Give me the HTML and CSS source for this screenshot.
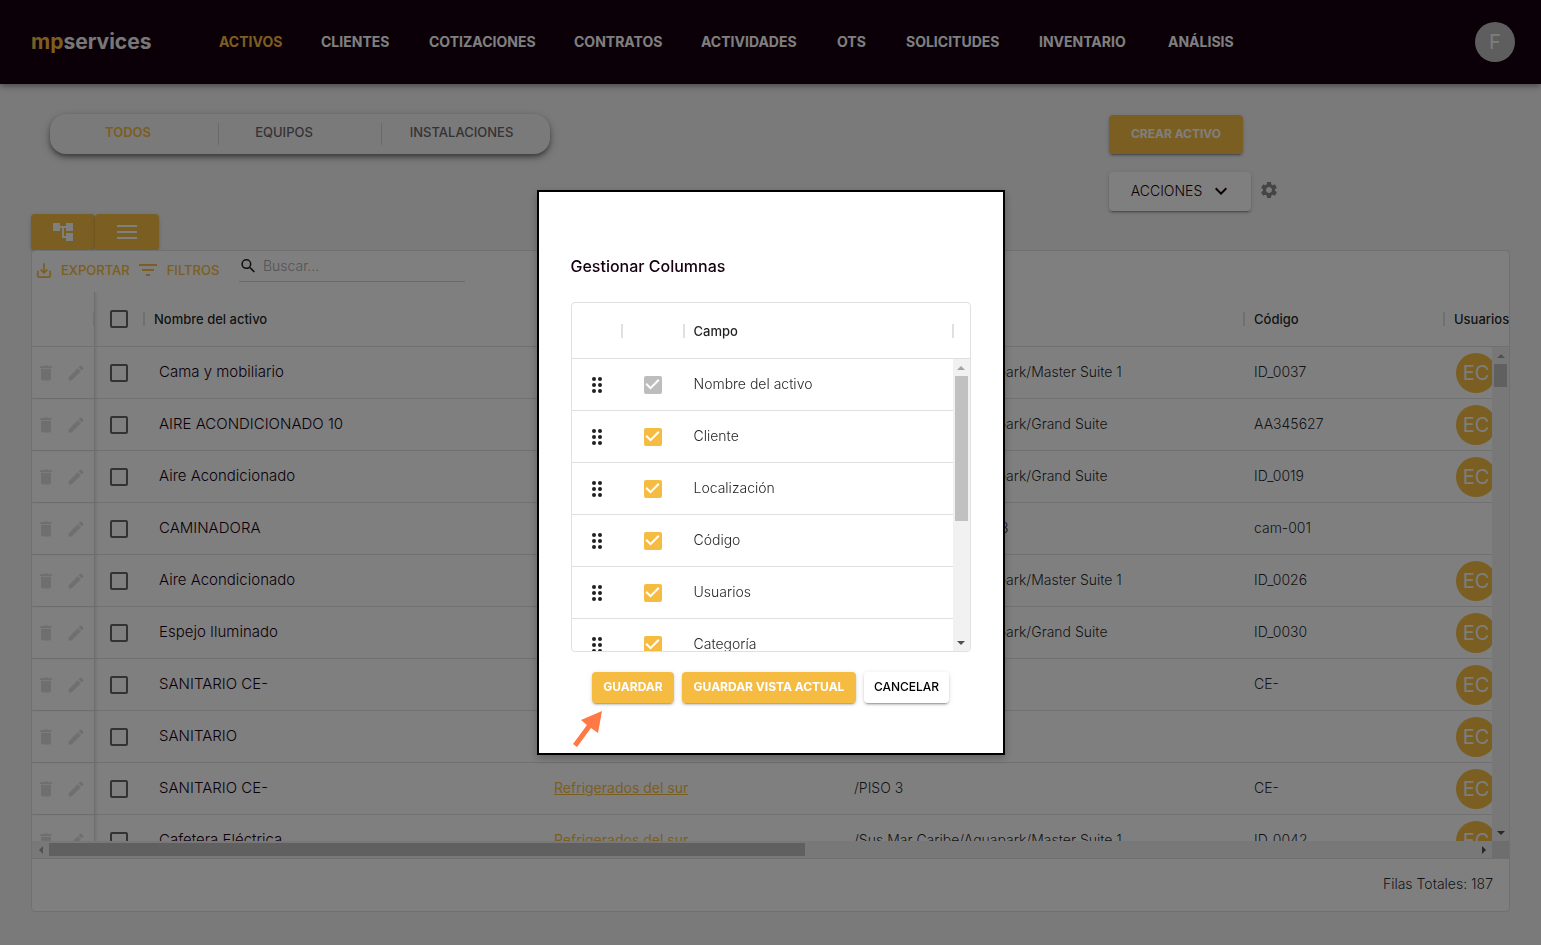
FILE: index.html
```html
<!DOCTYPE html>
<html lang="es">
<head>
<meta charset="utf-8">
<meta name="viewport" content="width=device-width, initial-scale=1">
<title>mpservices - Activos</title>
<link rel="stylesheet" href="styles.css">
</head>
<body>
<svg class="sprite" aria-hidden="true">
  <symbol id="i-trash" viewBox="0 0 24 24"><path d="M6 19c0 1.100.9 2 2 2h8c1.100 0 2-.9 2-2V7H6v12zM19 4h-3.500l-1-1h-5l-1 1H5v2h14V4z"/></symbol>
  <symbol id="i-pen" viewBox="0 0 24 24"><path d="M3 17.250V21h3.750L17.810 9.940l-3.750-3.750L3 17.250zM20.710 7.040c.39-.39.39-1.020 0-1.410l-2.340-2.340a1 1 0 0 0-1.410 0l-1.830 1.830 3.750 3.750 1.830-1.830z"/></symbol>
  <symbol id="i-drag" viewBox="0 0 12 18"><circle cx="3" cy="3" r="2"/><circle cx="9" cy="3" r="2"/><circle cx="3" cy="9" r="2"/><circle cx="9" cy="9" r="2"/><circle cx="3" cy="15" r="2"/><circle cx="9" cy="15" r="2"/></symbol>
</svg>

<header class="topbar">
  <a class="logo" href="#"><span class="logo-mp">mp</span>services</a>
  <nav class="nav">
    <a class="active" href="#">ACTIVOS</a>
    <a href="#">CLIENTES</a>
    <a href="#">COTIZACIONES</a>
    <a href="#">CONTRATOS</a>
    <a href="#">ACTIVIDADES</a>
    <a href="#">OTS</a>
    <a href="#">SOLICITUDES</a>
    <a href="#">INVENTARIO</a>
    <a href="#">ANÁLISIS</a>
  </nav>
  <button class="avatar user" type="button">F</button>
</header>

<main class="page">
  <section class="controls">
    <div class="tabs">
      <button class="tab tab-all active" type="button">TODOS</button>
      <button class="tab tab-equip" type="button">EQUIPOS</button>
      <button class="tab" type="button">INSTALACIONES</button>
    </div>
    <div class="actions">
      <button class="btn btn-primary btn-create" type="button">CREAR ACTIVO</button>
      <div class="actions-row">
        <button class="btn btn-actions" type="button">ACCIONES
          <svg width="24" height="24" viewBox="0 0 24 24"><path d="M7.410 8.590 12 13.170l4.590-4.580L18 10l-6 6-6-6z" fill="currentColor"/></svg>
        </button>
        <button class="icon-btn" type="button" aria-label="Configuración">
          <svg width="20" height="20" viewBox="0 0 24 24"><path fill="currentColor" d="M19.140 12.940c.04-.3.06-.61.06-.94 0-.32-.02-.64-.07-.94l2.030-1.580c.18-.14.23-.41.12-.61l-1.920-3.320c-.12-.22-.37-.29-.59-.22l-2.390.96c-.5-.38-1.030-.7-1.620-.94l-.36-2.540c-.04-.24-.24-.41-.48-.41h-3.840c-.24 0-.43.17-.47.41l-.36 2.540c-.59.24-1.130.57-1.620.94l-2.390-.96c-.22-.08-.47 0-.59.22L2.740 8.870c-.12.21-.08.47.12.61l2.030 1.580c-.05.3-.09.63-.09.94s.02.64.07.94l-2.030 1.580c-.18.14-.23.41-.12.61l1.920 3.320c.12.22.37.29.59.22l2.390-.96c.5.38 1.030.7 1.620.94l.36 2.540c.05.24.24.41.48.41h3.840c.24 0 .44-.17.47-.41l.36-2.540c.59-.24 1.130-.56 1.620-.94l2.390.96c.22.08.47 0 .59-.22l1.920-3.320c.12-.22.07-.47-.12-.61l-2.010-1.580zM12 15.600c-1.980 0-3.600-1.620-3.600-3.600s1.620-3.600 3.600-3.600 3.600 1.620 3.600 3.600-1.620 3.600-3.600 3.600z"/></svg>
        </button>
      </div>
    </div>
  </section>

  <div class="views">
    <button class="btn btn-primary view" type="button" aria-label="Vista de árbol"><svg width="24" height="24" viewBox="0 0 24 24"><path fill="currentColor" d="M22 11V3h-7v3H9V3H2v8h7V8h2v10h4v3h7v-8h-7v3h-2V8h2v3z"/></svg></button>
    <button class="btn btn-primary view" type="button" aria-label="Vista de lista"><svg width="20" height="14" viewBox="0 0 20 14"><path fill="currentColor" d="M0 0h20v2H0zM0 6h20v2H0zM0 12h20v2H0z"/></svg></button>
  </div>

  <section class="grid">
    <div class="toolbar">
      <button class="tool" type="button"><svg width="20" height="20" viewBox="0 0 24 24"><path fill="none" stroke="currentColor" stroke-width="2" d="M4.500 13v6A1.500 1.500 0 0 0 6 20.500h12a1.500 1.500 0 0 0 1.500-1.500v-6M12 4v11M8 11.500l4 4 4-4"/></svg>EXPORTAR</button>
      <button class="tool" type="button"><svg width="18" height="12" viewBox="0 0 18 12"><path fill="currentColor" d="M0 0h18v2H0zM3 5h12v2H3zM7 10h4v2H7z"/></svg>FILTROS</button>
      <label class="search">
        <svg width="20" height="20" viewBox="0 0 24 24"><path fill="currentColor" d="M15.500 14h-.79l-.28-.27A6.470 6.470 0 0 0 16 9.500 6.500 6.500 0 1 0 9.500 16c1.610 0 3.090-.59 4.230-1.570l.27.28v.79l5 4.990L20.490 19l-4.990-5zm-6 0a4.500 4.500 0 1 1 0-9 4.500 4.500 0 0 1 0 9z"/></svg>
        <input type="text" placeholder="Buscar..." aria-label="Buscar">
      </label>
    </div>

    <div class="head-clip">
      <table class="data">
        <colgroup><col class="c-tools"><col class="c-check"><col class="c-name"><col class="c-client"><col class="c-place"><col class="c-code"><col class="c-users"></colgroup>
        <thead><tr>
          <th class="pinned"></th><th><input class="check" type="checkbox" aria-label="Seleccionar todo"></th><th>Nombre del activo</th><th>Cliente</th><th>Localización</th><th>Código</th><th class="last">Usuarios</th>
        </tr></thead>
      </table>
    </div>

    <div class="body-row">
      <div class="body-clip">
        <table class="data">
          <colgroup><col class="c-tools"><col class="c-check"><col class="c-name"><col class="c-client"><col class="c-place"><col class="c-code"><col class="c-users"></colgroup>
          <tbody>
            <tr><td class="pinned"><svg class="ico"><use href="#i-trash"/></svg><svg class="ico"><use href="#i-pen"/></svg></td><td><input class="check" type="checkbox" aria-label="Seleccionar fila"></td><td class="name">Cama y mobiliario</td><td><a href="#">Refrigerados del sur</a></td><td>/Sus Mar Caribe/Aquapark/Master Suite 1</td><td>ID_0037</td><td class="users"><span class="avatar">EC</span></td></tr>
            <tr><td class="pinned"><svg class="ico"><use href="#i-trash"/></svg><svg class="ico"><use href="#i-pen"/></svg></td><td><input class="check" type="checkbox" aria-label="Seleccionar fila"></td><td class="name">AIRE ACONDICIONADO 10</td><td><a href="#">Refrigerados del sur</a></td><td>/Sus Mar Caribe/Aquapark/Grand Suite</td><td>AA345627</td><td class="users"><span class="avatar">EC</span></td></tr>
            <tr><td class="pinned"><svg class="ico"><use href="#i-trash"/></svg><svg class="ico"><use href="#i-pen"/></svg></td><td><input class="check" type="checkbox" aria-label="Seleccionar fila"></td><td class="name">Aire Acondicionado</td><td><a href="#">Refrigerados del sur</a></td><td>/Sus Mar Caribe/Aquapark/Grand Suite</td><td>ID_0019</td><td class="users"><span class="avatar">EC</span></td></tr>
            <tr><td class="pinned"><svg class="ico"><use href="#i-trash"/></svg><svg class="ico"><use href="#i-pen"/></svg></td><td><input class="check" type="checkbox" aria-label="Seleccionar fila"></td><td class="name">CAMINADORA</td><td><a href="#">Refrigerados del sur</a></td><td>/Sus Mar Caribe/PISO 3</td><td>cam-001</td><td class="users"></td></tr>
            <tr><td class="pinned"><svg class="ico"><use href="#i-trash"/></svg><svg class="ico"><use href="#i-pen"/></svg></td><td><input class="check" type="checkbox" aria-label="Seleccionar fila"></td><td class="name">Aire Acondicionado</td><td><a href="#">Refrigerados del sur</a></td><td>/Sus Mar Caribe/Aquapark/Master Suite 1</td><td>ID_0026</td><td class="users"><span class="avatar">EC</span></td></tr>
            <tr><td class="pinned"><svg class="ico"><use href="#i-trash"/></svg><svg class="ico"><use href="#i-pen"/></svg></td><td><input class="check" type="checkbox" aria-label="Seleccionar fila"></td><td class="name">Espejo Iluminado</td><td><a href="#">Refrigerados del sur</a></td><td>/Sus Mar Caribe/Aquapark/Grand Suite</td><td>ID_0030</td><td class="users"><span class="avatar">EC</span></td></tr>
            <tr><td class="pinned"><svg class="ico"><use href="#i-trash"/></svg><svg class="ico"><use href="#i-pen"/></svg></td><td><input class="check" type="checkbox" aria-label="Seleccionar fila"></td><td class="name">SANITARIO CE-</td><td></td><td></td><td>CE-</td><td class="users"><span class="avatar">EC</span></td></tr>
            <tr><td class="pinned"><svg class="ico"><use href="#i-trash"/></svg><svg class="ico"><use href="#i-pen"/></svg></td><td><input class="check" type="checkbox" aria-label="Seleccionar fila"></td><td class="name">SANITARIO</td><td><a href="#">Refrigerados del sur</a></td><td>/PISO 3</td><td></td><td class="users"><span class="avatar">EC</span></td></tr>
            <tr><td class="pinned"><svg class="ico"><use href="#i-trash"/></svg><svg class="ico"><use href="#i-pen"/></svg></td><td><input class="check" type="checkbox" aria-label="Seleccionar fila"></td><td class="name">SANITARIO CE-</td><td><a href="#">Refrigerados del sur</a></td><td>/PISO 3</td><td>CE-</td><td class="users"><span class="avatar">EC</span></td></tr>
            <tr><td class="pinned"><svg class="ico"><use href="#i-trash"/></svg><svg class="ico"><use href="#i-pen"/></svg></td><td><input class="check" type="checkbox" aria-label="Seleccionar fila"></td><td class="name">Cafetera Eléctrica</td><td><a href="#">Refrigerados del sur</a></td><td>/Sus Mar Caribe/Aquapark/Master Suite 1</td><td>ID_0042</td><td class="users"><span class="avatar">EC</span></td></tr>
          </tbody>
        </table>
      </div>
      <div class="vbar"><i class="arrow up"></i><i class="thumb thumb-short"></i><i class="arrow down"></i></div>
    </div>
    <div class="hbar-row">
      <div class="hbar"><i class="arrow left"></i><div class="rail"><i class="thumb"></i></div><i class="arrow right"></i></div>
      <div class="corner"></div>
    </div>
    <footer class="total">Filas Totales: 187</footer>
  </section>
</main>

<div class="backdrop">
  <div class="modal" role="dialog" aria-modal="true" aria-labelledby="modal-title">
    <h2 id="modal-title">Gestionar Columnas</h2>
    <div class="fields">
      <table class="field-table">
        <colgroup><col class="f-drag"><col class="f-check"><col></colgroup>
        <thead><tr><th></th><th></th><th>Campo</th><th class="f-end"></th></tr></thead>
      </table>
      <div class="fields-body">
        <div class="fields-clip">
          <table class="field-table">
            <colgroup><col class="f-drag"><col class="f-check"><col></colgroup>
            <tbody>
              <tr><td><svg class="drag"><use href="#i-drag"/></svg></td><td><input class="check" id="f1" type="checkbox" checked disabled></td><td><label for="f1">Nombre del activo</label></td></tr>
              <tr><td><svg class="drag"><use href="#i-drag"/></svg></td><td><input class="check" id="f2" type="checkbox" checked></td><td><label for="f2">Cliente</label></td></tr>
              <tr><td><svg class="drag"><use href="#i-drag"/></svg></td><td><input class="check" id="f3" type="checkbox" checked></td><td><label for="f3">Localización</label></td></tr>
              <tr><td><svg class="drag"><use href="#i-drag"/></svg></td><td><input class="check" id="f4" type="checkbox" checked></td><td><label for="f4">Código</label></td></tr>
              <tr><td><svg class="drag"><use href="#i-drag"/></svg></td><td><input class="check" id="f5" type="checkbox" checked></td><td><label for="f5">Usuarios</label></td></tr>
              <tr><td><svg class="drag"><use href="#i-drag"/></svg></td><td><input class="check" id="f6" type="checkbox" checked></td><td><label for="f6">Categoría</label></td></tr>
            </tbody>
          </table>
        </div>
        <div class="vbar"><i class="arrow up"></i><i class="thumb thumb-long"></i><i class="arrow down"></i></div>
      </div>
    </div>
    <div class="modal-actions">
      <button class="btn btn-primary btn-save" type="button">GUARDAR</button>
      <button class="btn btn-primary btn-save-view" type="button">GUARDAR VISTA ACTUAL</button>
      <button class="btn btn-cancel" type="button">CANCELAR</button>
    </div>
    <svg class="pointer" width="32" height="38" viewBox="0 0 32 38" aria-hidden="true"><path fill="#ff7846" d="M30 2 26 24l-7-5L5 38l-4-3L15 16l-6-5z"/></svg>
  </div>
</div>
</body>
</html>
```
FILE: styles.css
```css
:root {
  --yellow: #f6bc42;
  --line: #e0e0e0;
  --ink: #160010;
  --shadow: 0 3px 1px -2px rgba(0, 0, 0, .2), 0 2px 2px rgba(0, 0, 0, .14), 0 1px 5px rgba(0, 0, 0, .12);
}

* { box-sizing: border-box; }

body {
  display: flex;
  flex-direction: column;
  height: 100vh;
  margin: 0;
  overflow: hidden;
  background: #f4f4f4;
  color: rgba(0, 0, 0, .87);
  font: 14px/20px Inter, "Liberation Sans", sans-serif;
}

button, input { font: inherit; }
button { padding: 0; border: 0; background: none; cursor: pointer; }
.sprite { position: absolute; width: 0; height: 0; }

/* Top bar */
.topbar {
  display: flex;
  flex: none;
  align-items: center;
  height: 84px;
  padding: 0 26px 0 31px;
  background: var(--ink);
  box-shadow: 0 2px 4px -1px rgba(0, 0, 0, .2), 0 4px 5px rgba(0, 0, 0, .14), 0 1px 10px rgba(0, 0, 0, .12);
}
.logo { width: 188px; color: #f0eeee; font-size: 21px; font-weight: 700; text-decoration: none; }
.logo-mp { color: var(--yellow); }
.nav { display: grid; grid-template-columns: 102px 108px 145px 127px 136px 69px 133px 129px auto; }
.nav a { color: #fff; font-weight: 700; text-decoration: none; }
.nav .active { color: var(--yellow); }
.avatar {
  display: inline-flex;
  flex: none;
  align-items: center;
  justify-content: center;
  width: 40px;
  height: 40px;
  border-radius: 50%;
  background: var(--yellow);
  color: #fafafa;
  font-size: 20px;
}
.user { margin-left: auto; background: #bdbdbd; }

/* Page controls */
.page { display: flex; flex: 1; flex-direction: column; min-height: 0; padding: 30px 31px 33px; }
.controls { display: grid; grid-template-columns: 1fr 401px; height: 100px; flex: none; }
.tabs {
  display: grid;
  grid-template-columns: 169px 163px 159px;
  align-items: center;
  width: 500px;
  height: 40px;
  margin-left: 19px;
  border-radius: 16px;
  background: #f5f5f5;
  box-shadow: 0 3px 5px -1px rgba(0, 0, 0, .4), 0 3px 8px rgba(0, 0, 0, .3);
}
.tab { height: 22px; padding-bottom: 4px; color: #6b646a; font-size: 13px; font-weight: 500; line-height: 18px; }
.tab.active { color: var(--yellow); font-weight: 600; }
.tab-all { padding-right: 12px; border-right: 1px solid #d5d5d5; }
.tab-equip { padding-right: 32px; border-right: 1px solid #d5d5d5; }
.actions { display: flex; flex-direction: column; gap: 18px; padding-top: 1px; }
.actions-row { display: flex; align-items: center; gap: 8px; }
.btn {
  display: flex;
  align-items: center;
  justify-content: center;
  padding-bottom: 2px;
  border-radius: 4px;
  background: #fff;
  box-shadow: var(--shadow);
  color: #000;
  white-space: nowrap;
}
.btn-primary { background: var(--yellow); color: #fff; font-weight: 700; }
.btn-create { width: 134px; height: 39px; font-size: 12px; }
.btn-actions { gap: 7px; width: 142px; height: 39px; padding-left: 4px; font-weight: 300; color: var(--ink); }
.icon-btn { display: flex; padding-bottom: 4px; color: #8b8b8b; }
.views { display: flex; flex: none; }
.view { width: 64px; height: 36px; padding: 0; color: #fff; }

/* Asset grid */
.grid {
  display: flex;
  flex: 1;
  flex-direction: column;
  min-height: 0;
  overflow: hidden;
  border: 1px solid var(--line);
  border-radius: 4px;
  background: #fff;
}
.toolbar { display: flex; flex: none; height: 41px; padding: 0 0 3px 2px; }
.tool { display: flex; align-items: center; gap: 7px; margin-right: 9px; color: var(--yellow); font-size: 13px; font-weight: 500; }
.tool + .tool { gap: 10px; margin-right: 20px; }
.search { display: flex; align-items: center; width: 226px; height: 31px; border-bottom: 1px solid #d5d5d5; }
.search input { min-width: 0; padding: 0 0 0 5px; border: 0; outline: 0; background: none; font-size: 14px; font-weight: 300; }
.search input::placeholder { color: #a8a8a8; opacity: 1; }
.head-clip { flex: none; overflow: hidden; border-bottom: 1px solid var(--line); }
.data { width: 1652px; table-layout: fixed; border-collapse: separate; border-spacing: 0; }
.c-tools { width: 63px; }
.c-check { width: 49px; }
.c-name { width: 400px; }
.c-client { width: 300px; }
.c-place { width: 400px; }
.c-code { width: 200px; }
.c-users { width: 240px; }
.data th { position: relative; height: 54px; padding: 0 10px; font-size: 13px; font-weight: 500; text-align: left; }
.data th::after, .field-table th::after {
  position: absolute;
  top: 50%;
  right: -1px;
  width: 2px;
  height: 14px;
  margin-top: -7px;
  background: #e0e0e0;
  content: "";
}
.data th.last::after { display: none; }
.data td { height: 52px; padding: 0 10px 2px; border-bottom: 1px solid var(--line); font-weight: 300; white-space: nowrap; }
.data .name { padding-left: 15px; color: var(--ink); font-size: 15px; }
.data a { color: var(--yellow); font-weight: 400; }
.data .pinned { padding: 0 0 0 4px; border-right: 1px solid #dcdcdc; box-shadow: 2px 0 2px rgba(0, 0, 0, .08); }
.data .users { padding: 0 0 0 12px; font-weight: 400; }
.data td:nth-child(2), .data th:nth-child(2) { padding: 0 0 0 15px; }
.ico { width: 20px; height: 20px; margin-right: 10px; fill: #dedede; vertical-align: middle; }
.check {
  display: block;
  width: 18px;
  height: 18px;
  margin: 0;
  appearance: none;
  border: 2px solid #666;
  border-radius: 2px;
}
.check:checked { border: 0; background: var(--yellow); }
.check:checked:disabled { background: #bdbdbd; }
.check:checked::before {
  display: block;
  width: 18px;
  height: 18px;
  background: #fff;
  clip-path: polygon(39% 78%, 11% 50%, 19% 42%, 39% 62%, 81% 20%, 89% 28%);
  content: "";
}
.body-row { display: flex; flex: 1; min-height: 0; }
.body-clip { flex: 1; overflow: hidden; }
.total { flex: none; padding: 15px 16px 17px; border-top: 1px solid var(--line); font-weight: 300; text-align: right; }

/* Scroll bars */
.vbar { display: flex; flex: none; flex-direction: column; align-items: center; width: 17px; background: #f1f1f1; }
.hbar-row { display: flex; flex: none; height: 17px; }
.hbar { display: flex; flex: 1; align-items: center; background: #f1f1f1; }
.corner { width: 17px; background: #dcdcdc; }
.rail { flex: 1; }
.rail .thumb { width: 53%; }
.thumb { display: block; width: 13px; height: 13px; background: #c1c1c1; }
.thumb-short { height: 23px; }
.thumb-long { height: 145px; }
.arrow { display: flex; flex: none; align-items: center; justify-content: center; width: 17px; height: 17px; }
.arrow::before { border: 4px solid transparent; content: ""; }
.up::before { border-top: 0; border-bottom-color: #a3a3a3; }
.down { margin-top: auto; }
.down::before { border-bottom: 0; border-top-color: #505050; }
.left::before { border-left: 0; border-right-color: #a3a3a3; }
.right::before { border-right: 0; border-left-color: #505050; }

/* Column dialog */
.backdrop {
  position: fixed;
  inset: 0;
  display: flex;
  align-items: center;
  justify-content: center;
  background: rgba(0, 0, 0, .5);
}
.modal {
  position: relative;
  width: 468px;
  padding: 62px 32px 50px;
  border: 2px solid #000;
  background: #fff;
  box-shadow: 0 3px 8px rgba(0, 0, 0, .25);
}
.modal h2 { margin: 0 0 24px; color: var(--ink); font-size: 16px; font-weight: 500; line-height: 24px; }
.fields { overflow: hidden; border: 1px solid var(--line); border-radius: 4px; }
.field-table { width: 100%; table-layout: fixed; border-collapse: separate; border-spacing: 0; }
.f-drag { width: 50px; }
.f-check { width: 62px; }
.f-end { width: 17px; }
.field-table th { position: relative; height: 56px; padding: 0 10px; border-bottom: 1px solid var(--line); font-size: 13px; font-weight: 500; text-align: left; }
.field-table th.f-end { padding: 0; }
.field-table th.f-end::after { display: none; }
.field-table td { height: 52px; padding: 0 10px 2px; border-bottom: 1px solid var(--line); font-weight: 300; }
.field-table td:nth-child(1) { padding: 0 0 0 19px; }
.field-table td:nth-child(2) { padding: 0 0 0 22px; }
.fields-body { display: flex; height: 292px; }
.fields-clip { flex: 1; overflow: hidden; }
.drag { display: block; width: 12px; height: 18px; fill: #212121; }
.modal-actions { display: flex; justify-content: center; gap: 8px; margin-top: 20px; }
.modal-actions .btn { height: 31px; font-size: 12px; }
.btn-save { width: 82px; }
.btn-save-view { width: 174px; }
.btn-cancel { width: 85px; font-weight: 500; }
.pointer { position: absolute; bottom: 6px; left: 33px; }
```
